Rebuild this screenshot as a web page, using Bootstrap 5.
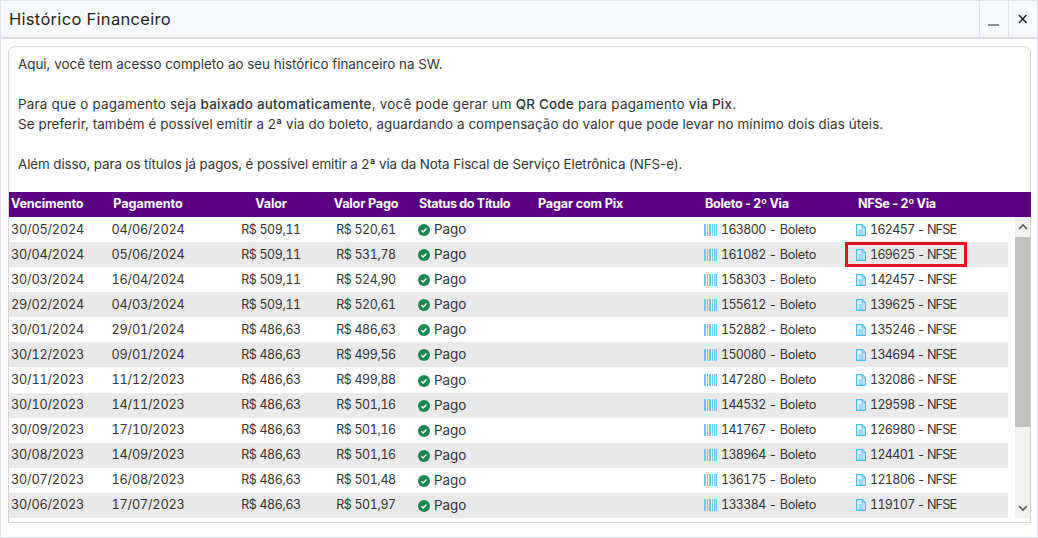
<!DOCTYPE html>
<html lang="pt-BR"><head><meta charset="utf-8"><title>Histórico Financeiro</title>
<link href="https://cdn.jsdelivr.net/npm/bootstrap@5.3.0/dist/css/bootstrap.min.css" rel="stylesheet">
<style>
html,body{height:100%;overflow:hidden;background:#fff}
body{font-family:Inter,"Liberation Sans",sans-serif;color:#333;font-size:13.4px}
.janela{height:538px;border:1px solid #dfe2e6;border-radius:0;--bs-card-bg:#fff}
.topo{height:38px;background:#f8f9fa;border-bottom:2px solid #d9dbdd;padding:0}
.topo h1{font-size:16.5px;font-weight:400;margin:2px 0 0 8px;color:#212529;letter-spacing:.3px}
.btn-jan{width:29px;height:36px;border:0;border-left:1px solid #dfe2e6;background:transparent;padding:0;border-radius:0}
.corpo{padding:7px 6px 0 7px}
.painel{height:477px;border:1px solid #d5d5d5;border-top-left-radius:7px;border-top-right-radius:7px}
.intro{height:145px;padding:7px 9px 0;line-height:20px}
.intro p{margin:0}
.intro b{font-weight:500}
.l1{letter-spacing:0}.l2{letter-spacing:.24px}.l3{letter-spacing:.08px}.l6{letter-spacing:-.1px}
.grade{table-layout:fixed;border-collapse:collapse;margin:0}
.grade th,.grade td{padding:0 2px;white-space:nowrap;overflow:visible}
.cab{width:1022px;background:#5a0082;color:#fff;height:25px}
.cab th{font-weight:700;height:25px;font-size:12.6px;letter-spacing:-.15px}
.cab .c2c{letter-spacing:0}
.linhas{width:999px}
.linhas td{height:25px;line-height:24px;color:#333;font-size:12.7px;font-variant-numeric:tabular-nums}
.linhas tr:nth-child(even) td{background:#e8e9e8}
.dt{letter-spacing:-.2px}
.vl{font-size:12.4px;letter-spacing:-.35px}
.nr{font-size:12.4px;letter-spacing:-.6px}
.sb{letter-spacing:-.3px}
.sn{letter-spacing:-.9px}
.c1{width:75px}.c2{width:128px}.c3{width:118px}.c4{width:72px}.c5{width:128px}.c6{width:172px}.c7{width:152px}.c8{width:154px}.c8h{width:177px}
.c2c,.c3c,.c4c{text-align:center}
.grade .c5c{padding-left:16px}
.cab .c5c{padding-left:17px;letter-spacing:-.35px}
.grade .c6c{padding-left:8px}
.cab .c7h{padding-left:3px;letter-spacing:-.3px}
.cab .c8t{padding-left:4px;letter-spacing:-.3px}
.ic{vertical-align:-2px;margin-right:4px}
.pg{font-size:13.4px}
.celula{position:relative}
.destaque{position:absolute;left:-9px;top:0;width:122px;height:25px;border:3px solid #e3121f;pointer-events:none}
.rolagem{width:16px;height:301px;background:#f1f1f1;margin-left:7px}
.barra{height:190px;background:#c1c1c1;margin:0}
.seta{height:20px}
</style></head>
<body>
<div class="card janela">
 <div class="topo d-flex align-items-center justify-content-between">
  <h1>Histórico Financeiro</h1>
  <div class="d-flex">
   <button class="btn-jan" aria-label="Minimizar"><svg width="12" height="36" viewBox="0 0 12 36"><rect x="0" y="23" width="11" height="2" fill="#8b8f94"/></svg></button>
   <button class="btn-jan" aria-label="Fechar"><svg width="10" height="36" viewBox="0 0 10 36"><path d="M1 14l7.500 8M8.500 14L1 22" stroke="#1a2230" stroke-width="1.600" fill="none"/></svg></button>
  </div>
 </div>
 <div class="corpo">
  <div class="painel">
   <div class="intro">
    <p class="l1">Aqui, você tem acesso completo ao seu histórico financeiro na SW.</p>
    <p>&nbsp;</p>
    <p class="l2">Para que o pagamento seja <b>baixado automaticamente</b>, você pode gerar um <b>QR Code</b> para pagamento <b>via Pix</b>.</p>
    <p class="l3">Se preferir, também é possível emitir a 2ª via do boleto, aguardando a compensação do valor que pode levar no mínimo dois dias úteis.</p>
    <p>&nbsp;</p>
    <p class="l6">Além disso, para os títulos já pagos, é possível emitir a 2ª via da Nota Fiscal de Serviço Eletrônica (NFS-e).</p>
   </div>
   <table class="grade cab"><colgroup><col class="c1"><col class="c2"><col class="c3"><col class="c4"><col class="c5"><col class="c6"><col class="c7"><col class="c8h"></colgroup>
    <thead><tr><th>Vencimento</th><th class="c2c">Pagamento</th><th class="c3c">Valor</th><th class="c4c">Valor Pago</th><th class="c5c">Status do Título</th><th class="c6c">Pagar com Pix</th><th class="c7h">Boleto - 2º Via</th><th class="c8t">NFSe - 2º Via</th></tr></thead>
   </table>
   <div class="d-flex">
    <table class="grade linhas"><colgroup><col class="c1"><col class="c2"><col class="c3"><col class="c4"><col class="c5"><col class="c6"><col class="c7"><col class="c8"></colgroup>
     <tbody id="corpo-lista"></tbody>
    </table>
    <div class="rolagem d-flex flex-column">
     <div class="seta d-flex justify-content-center align-items-center"><svg width="10" height="6" viewBox="0 0 10 6"><path d="M1 5l4-4 4 4" stroke="#555" stroke-width="1.600" fill="none"/></svg></div>
     <div class="barra"></div>
     <div class="flex-grow-1"></div>
     <div class="seta d-flex justify-content-center align-items-center"><svg width="10" height="6" viewBox="0 0 10 6"><path d="M1 1l4 4 4-4" stroke="#555" stroke-width="1.600" fill="none"/></svg></div>
    </div>
   </div>
  </div>
 </div>
</div>
<script>
var d=[["30/05/2024","04/06/2024","509,11","520,61","163800","162457"],["30/04/2024","05/06/2024","509,11","531,78","161082","169625"],["30/03/2024","16/04/2024","509,11","524,90","158303","142457"],["29/02/2024","04/03/2024","509,11","520,61","155612","139625"],["30/01/2024","29/01/2024","486,63","486,63","152882","135246"],["30/12/2023","09/01/2024","486,63","499,56","150080","134694"],["30/11/2023","11/12/2023","486,63","499,88","147280","132086"],["30/10/2023","14/11/2023","486,63","501,16","144532","129598"],["30/09/2023","17/10/2023","486,63","501,16","141767","126980"],["30/08/2023","14/09/2023","486,63","501,16","138964","124401"],["30/07/2023","16/08/2023","486,63","501,48","136175","121806"],["30/06/2023","17/07/2023","486,63","501,97","133384","119107"]];
var ok='<svg class="ic" width="12" height="12" viewBox="0 0 12 12"><circle cx="6" cy="6" r="6" fill="#198754"/><path d="M3.400 6.200l1.800 1.700 3.300-3.400" stroke="#fff" stroke-width="1.400" fill="none"/></svg>';
var bar='<svg class="ic" width="13" height="12" viewBox="0 0 13 12" fill="#6cc9ec">'+[[0,2],[3,1],[5,2],[8,1],[10,1.500],[12,1]].map(function(b){return '<rect x="'+b[0]+'" y="0" width="'+b[1]+'" height="12"/>'}).join('')+'</svg>';
var doc='<svg class="ic" width="10" height="12" viewBox="0 0 10 12"><path d="M.6.600h5.800l3 3v7.800H.6z" fill="#e3f4fb" stroke="#4dbce6" stroke-width="1.200"/><path d="M6 .600v3.400h3.400" fill="none" stroke="#4dbce6"/><path d="M2.500 6h5M2.500 8h5M2.500 10h5" stroke="#4dbce6" stroke-width=".9"/></svg>';
document.getElementById('corpo-lista').innerHTML=d.map(function(r,i){return '<tr><td><span class="dt">'+r[0]+'</span></td><td class="c2c"><span class="dt">'+r[1]+'</span></td><td class="c3c"><span class="vl">R$ '+r[2]+'</span></td><td class="c4c"><span class="vl">R$ '+r[3]+'</span></td><td class="c5c">'+ok+'<span class="pg">Pago</span></td><td></td><td>'+bar+'<span class="nr">'+r[4]+'</span><span class="sb"> - Boleto</span></td><td class="celula">'+doc+'<span class="nr">'+r[5]+'</span><span class="sn"> - NFSE</span>'+(i==1?'<span class="destaque"></span>':'')+'</td></tr>'}).join('');
</script>
<script src="https://cdn.jsdelivr.net/npm/bootstrap@5.3.0/dist/js/bootstrap.bundle.min.js"></script>
</body></html>
